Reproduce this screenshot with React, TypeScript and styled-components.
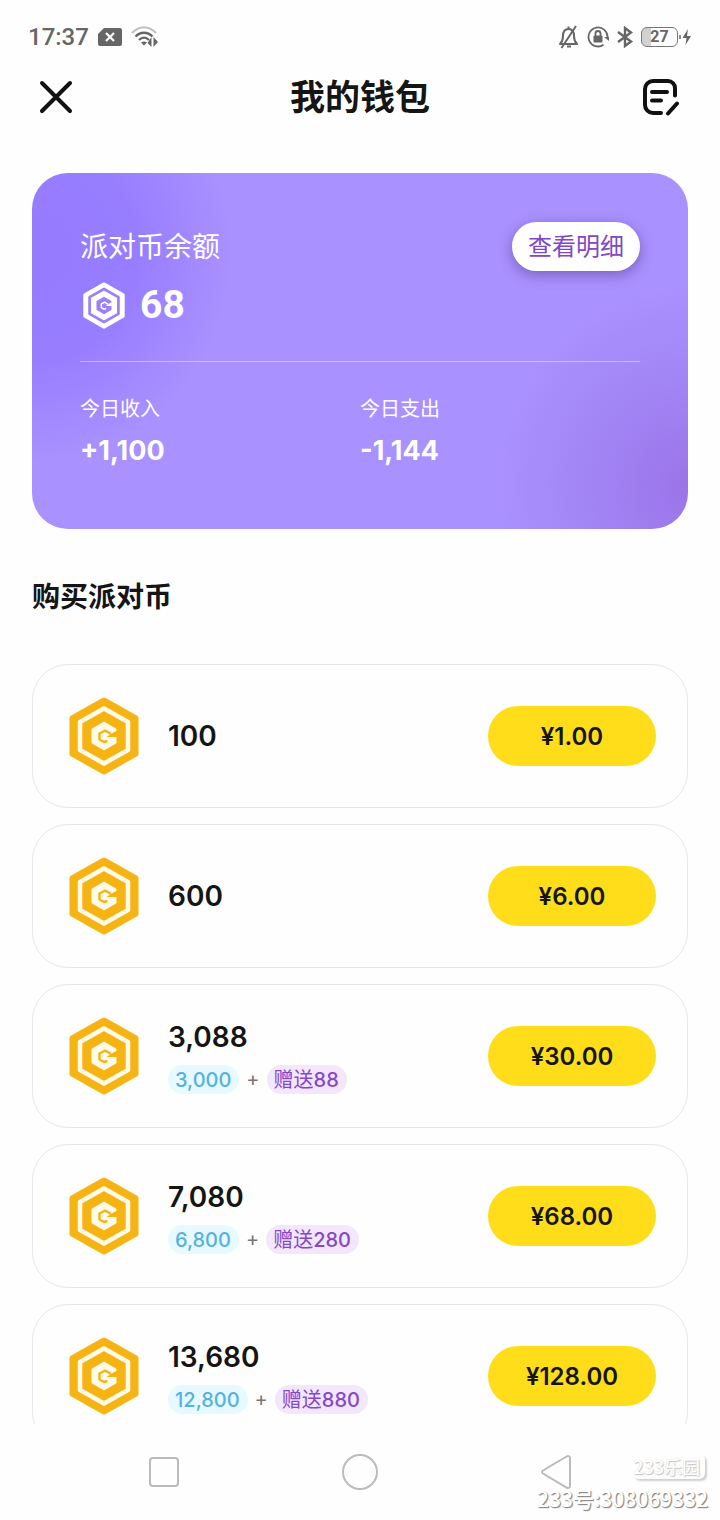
import React from 'react';
import styled, { createGlobalStyle } from 'styled-components';

const GlobalStyle = createGlobalStyle`
  *, *::before, *::after { box-sizing: border-box; }
  body {
    margin: 0;
    background: #fefefe;
    color: #151515;
    font-family: Inter, "Noto Sans CJK SC", sans-serif;
  }
  h1, h2, p, dl, dd, ul { margin: 0; padding: 0; }
  button { border: 0; padding: 0; background: none; font: inherit; color: inherit; cursor: pointer; }
`;

const Screen = styled.div`
  display: flex;
  flex-direction: column;
  height: 100vh;
  overflow: hidden;
`;

const StatusBar = styled.div`
  display: flex;
  align-items: center;
  justify-content: space-between;
  flex: none;
  height: 74px;
  padding: 0 28px;
  color: #666;
  font-family: Roboto, sans-serif;
`;

const StatusGroup = styled.div<{ $gap: number }>`
  display: flex;
  align-items: center;
  gap: ${({ $gap }) => $gap}px;
`;

const Clock = styled.span`
  font-size: 24px;
  font-weight: 500;
  line-height: 28px;
`;

const Battery = styled.span`
  display: flex;
  align-items: center;
  justify-content: center;
  width: 37px;
  height: 20px;
  border: 1px solid #777;
  border-radius: 6px;
  background: linear-gradient(90deg, #d2d2d2 27%, transparent 27%);
  font-size: 16px;
  font-weight: 700;
  line-height: 18px;
`;

const Header = styled.header`
  display: grid;
  grid-template-columns: 48px 1fr 48px;
  align-items: center;
  flex: none;
  height: 46px;
  padding: 0 32px;
`;

const IconButton = styled.button`
  display: flex;
  align-items: center;
  justify-content: center;
  height: 46px;
`;

const Title = styled.h1`
  font-size: 35px;
  font-weight: 700;
  line-height: 44px;
  text-align: center;
`;

const Main = styled.main`
  flex: 1;
  min-height: 0;
  padding: 53px 32px 0;
  overflow-y: auto;
  scrollbar-width: none;
`;

const BalanceCard = styled.section`
  padding: 49px 48px 60px;
  border-radius: 36px;
  color: #fff;
  background:
    radial-gradient(ellipse 190px 200px at 100% 88%, #9a74e8 0%, rgba(154, 116, 232, 0.5) 45%, rgba(154, 116, 232, 0) 100%),
    radial-gradient(ellipse 200px 210px at 0% 22%, #967bff 0%, #977dff 50%, rgba(151, 125, 255, 0) 100%),
    #a991ff;
`;

const BalanceTop = styled.div`
  display: flex;
  align-items: center;
  justify-content: space-between;
  height: 48px;
`;

const BalanceLabel = styled.h2`
  padding-top: 2px;
  font-size: 28px;
  font-weight: 400;
  line-height: 40px;
`;

const DetailButton = styled.button`
  height: 49px;
  padding: 2px 16px 0;
  border-radius: 25px;
  background: #fff;
  color: #8246c8;
  font-size: 24px;
  line-height: 46px;
  box-shadow: 0 4px 14px rgba(60, 40, 110, 0.45);
`;

const BalanceValue = styled.p`
  display: flex;
  align-items: center;
  gap: 15px;
  height: 46px;
  margin-top: 12px;
  padding: 0 3px;
  font-family: Roboto, sans-serif;
  font-size: 39px;
  font-weight: 700;
  line-height: 46px;
`;

const Stats = styled.dl`
  display: grid;
  grid-template-columns: 1fr 1fr;
  margin-top: 33px;
  padding-top: 33px;
  border-top: 1px solid rgba(255, 255, 255, 0.4);
`;

const StatLabel = styled.dt`
  font-size: 20px;
  line-height: 28px;
`;

const StatValue = styled.dd`
  margin-top: 10px;
  font-size: 27px;
  font-weight: 700;
  line-height: 36px;
`;

const SectionTitle = styled.h2`
  margin: 48px 0 47px;
  font-size: 28px;
  font-weight: 700;
  line-height: 40px;
`;

const PackageList = styled.ul`
  display: flex;
  flex-direction: column;
  gap: 16px;
  list-style: none;
`;

const PackageRow = styled.li`
  display: flex;
  align-items: center;
  gap: 29px;
  height: 144px;
  padding: 0 31px 0 36px;
  border: 1px solid #e7e6ec;
  border-radius: 36px;
`;

const PackageInfo = styled.div`
  display: flex;
  flex: 1;
  flex-direction: column;
  gap: 10px;
`;

const Amount = styled.span`
  font-size: 28px;
  font-weight: 600;
  line-height: 36px;
`;

const Breakdown = styled.span`
  display: flex;
  align-items: center;
  gap: 7px;
  color: #777;
  font-size: 20px;
`;

const Chip = styled.span<{ $tone: 'base' | 'gift' }>`
  padding: 1px 8px 0 7px;
  border-radius: 15px;
  background: ${({ $tone }) => ($tone === 'base' ? '#e6faff' : '#f2e7fd')};
  color: ${({ $tone }) => ($tone === 'base' ? '#55b2de' : '#8448c8')};
  font-weight: 500;
  line-height: 28px;
`;

const GiftText = styled.span`
  font-weight: 400;
`;

const PriceButton = styled.button`
  width: 168px;
  height: 60px;
  border-radius: 30px;
  background: #ffdd1a;
  font-size: 24px;
  font-weight: 600;
`;

const NavBar = styled.nav`
  position: relative;
  display: grid;
  grid-template-columns: repeat(3, 1fr);
  flex: none;
  height: 96px;
  padding: 0 66px;
`;

const NavButton = styled.button`
  display: flex;
  align-items: center;
  justify-content: center;
`;

const Watermark = styled.div`
  position: absolute;
  right: 12px;
  bottom: 8px;
  display: flex;
  flex-direction: column;
  align-items: flex-end;
  gap: 5px;
  color: #fff;
  font-family: "Noto Sans CJK SC", sans-serif;
  pointer-events: none;
`;

const WatermarkLogo = styled.span`
  margin-right: 3px;
  padding: 0 5px 0 0;
  border-radius: 0 6px 6px 6px;
  font-size: 18px;
  font-weight: 500;
  line-height: 25px;
  text-shadow: 1px 1px 1px #c4c4c4, 0 0 1px #ccc;
  box-shadow: 2px 2px 2px #d0d0d0;
`;

const WatermarkId = styled.span`
  font-size: 21px;
  font-weight: 500;
  line-height: 28px;
  text-shadow: 1px 1px 1px #888, 1px 1px 1px #aaa;
`;

function Coin({ size, body, mark }: { size: number; body: string; mark: string }) {
  return (
    <svg width={size} height={Math.round((size * 78) / 70)} viewBox="-35 -39 70 78" aria-hidden="true">
      <path d="M0-36 32-18V18L0 36-32 18V-18Z" fill={body} stroke={body} strokeWidth="5" strokeLinejoin="round" />
      <path d="M0-27.500 24-14V14L0 27.500-24 14V-14Z" fill="none" stroke={mark} strokeWidth="4.500" strokeLinejoin="round" />
      <path d="M0-14 12-7V-5L6-1.500H12V7L0 14-12 7V-7Z" fill={mark} stroke={mark} strokeWidth="1" strokeLinejoin="round" />
      <path d="M13-5.500V1H2.500L7-2Z" fill={body} />
      <path d="M7-2 1-5.500-4.500-2.500V3.500L0 6 3.500 5" fill="none" stroke={body} strokeWidth="2.400" strokeLinejoin="round" />
    </svg>
  );
}

function SimIcon() {
  return (
    <svg width="24" height="18" viewBox="0 0 24 18" aria-hidden="true">
      <path d="M6 0H22a2 2 0 0 1 2 2V16a2 2 0 0 1-2 2H2a2 2 0 0 1-2-2V6Z" fill="#666" />
      <path d="m8 5 8 8m0-8-8 8" stroke="#fff" strokeWidth="2.200" />
    </svg>
  );
}

function WifiIcon() {
  return (
    <svg width="28" height="22" viewBox="0 0 28 22" fill="none" strokeWidth="2.400" aria-hidden="true">
      <path d="M1 7C8-.5 18-.5 25 7" stroke="#c4c4c4" />
      <path d="M4.500 10.500c5-5 12-5 17 0" stroke="#666" />
      <path d="M8 14c3-3 7-3 10 0" stroke="#666" />
      <path d="m10 16.500 3 3 3-3c-2-1.500-4-1.500-6 0Z" fill="#666" />
      <path d="M20.500 11v10l-4-4ZM22.500 11v10l4.500-5Z" fill="#666" />
    </svg>
  );
}

function MutedBellIcon() {
  return (
    <svg width="22" height="24" viewBox="0 0 22 24" fill="none" stroke="#666" strokeWidth="2" aria-hidden="true">
      <path d="M2 19c2.500-2.500 3-4 3-8 0-4.500 2-7 5.500-7S16 6.500 16 11c0 4 .5 5.500 3 8Z" strokeLinejoin="round" />
      <path d="M10.500 1.500V4M18 1 3.500 23" />
      <path d="M9 21.500h4" />
    </svg>
  );
}

function RotationLockIcon() {
  return (
    <svg width="22" height="22" viewBox="0 0 22 22" fill="none" stroke="#666" strokeWidth="1.800" aria-hidden="true">
      <path d="M16.500 18.700A9.500 9.500 0 1 1 20.500 11.500" />
      <path d="M17 11h5v4Z" fill="#666" stroke="none" />
      <rect x="6.500" y="9.500" width="9" height="7" rx="1" fill="#666" stroke="none" />
      <path d="M8.500 10V7.500a2.500 2.500 0 0 1 5 0V10" />
    </svg>
  );
}

function BluetoothIcon() {
  return (
    <svg width="18" height="22" viewBox="0 0 18 22" fill="none" stroke="#666" strokeWidth="2.400" aria-hidden="true">
      <path d="M2 6 15 15.500 9 20V2l6 4.500L2 16" />
    </svg>
  );
}

function ChargeIcon() {
  return (
    <svg width="14" height="18" viewBox="0 0 14 18" fill="#666" aria-hidden="true">
      <path d="M2 7v4" stroke="#666" strokeWidth="1.500" />
      <path d="M10 1 4.500 10h4l-1 7L13 8H9Z" />
    </svg>
  );
}

const packages = [
  { amount: '100', price: '¥1.00' },
  { amount: '600', price: '¥6.00' },
  { amount: '3,088', price: '¥30.00', base: '3,000', gift: '88' },
  { amount: '7,080', price: '¥68.00', base: '6,800', gift: '280' },
  { amount: '13,680', price: '¥128.00', base: '12,800', gift: '880' },
];

export default function App() {
  return (
    <>
      <GlobalStyle />
      <Screen>
        <StatusBar>
          <StatusGroup $gap={9}>
            <Clock>17:37</Clock>
            <SimIcon />
            <WifiIcon />
          </StatusGroup>
          <StatusGroup $gap={7}>
            <MutedBellIcon />
            <RotationLockIcon />
            <BluetoothIcon />
            <StatusGroup $gap={0}>
              <Battery>27</Battery>
              <ChargeIcon />
            </StatusGroup>
          </StatusGroup>
        </StatusBar>

        <Header>
          <IconButton aria-label="关闭">
            <svg width="34" height="34" viewBox="0 0 34 34" aria-hidden="true">
              <path d="m3 3 28 28M31 3 3 31" stroke="#111" strokeWidth="4" strokeLinecap="round" />
            </svg>
          </IconButton>
          <Title>我的钱包</Title>
          <IconButton aria-label="账单">
            <svg width="42" height="38" viewBox="0 0 42 38" fill="none" stroke="#111" strokeWidth="4" strokeLinecap="round" aria-hidden="true">
              <path d="M32 17.500V10a7 7 0 0 0-7-7H10a8 8 0 0 0-8 8V27a8 8 0 0 0 8 8h8M9 14h15M9 22.500h9M34 25.500 25 35.500" />
            </svg>
          </IconButton>
        </Header>

        <Main>
          <BalanceCard>
            <BalanceTop>
              <BalanceLabel>派对币余额</BalanceLabel>
              <DetailButton>查看明细</DetailButton>
            </BalanceTop>
            <BalanceValue>
              <Coin size={42} body="#fff" mark="#9a80fa" />
              68
            </BalanceValue>
            <Stats>
              <div>
                <StatLabel>今日收入</StatLabel>
                <StatValue>+1,100</StatValue>
              </div>
              <div>
                <StatLabel>今日支出</StatLabel>
                <StatValue>-1,144</StatValue>
              </div>
            </Stats>
          </BalanceCard>

          <SectionTitle>购买派对币</SectionTitle>

          <PackageList>
            {packages.map((item) => (
              <PackageRow key={item.amount}>
                <Coin size={70} body="#f6b414" mark="#fffbe6" />
                <PackageInfo>
                  <Amount>{item.amount}</Amount>
                  {item.base && (
                    <Breakdown>
                      <Chip $tone="base">{item.base}</Chip>
                      +
                      <Chip $tone="gift"><GiftText>赠送</GiftText>{item.gift}</Chip>
                    </Breakdown>
                  )}
                </PackageInfo>
                <PriceButton>{item.price}</PriceButton>
              </PackageRow>
            ))}
          </PackageList>
        </Main>

        <NavBar>
          <NavButton aria-label="最近任务">
            <svg width="30" height="30" viewBox="0 0 30 30" aria-hidden="true">
              <rect x="1" y="1" width="28" height="28" rx="3" fill="none" stroke="#bbb" strokeWidth="2" />
            </svg>
          </NavButton>
          <NavButton aria-label="主页">
            <svg width="36" height="36" viewBox="0 0 36 36" aria-hidden="true">
              <circle cx="18" cy="18" r="17" fill="none" stroke="#bbb" strokeWidth="2" />
            </svg>
          </NavButton>
          <NavButton aria-label="返回">
            <svg width="32" height="36" viewBox="0 0 32 36" aria-hidden="true">
              <path d="M26.500 2.500 3 16.500q-2 1.500 0 3L26.500 33.500q3.500 1.500 3.500-2V4.500q0-3.500-3.500-2Z" fill="none" stroke="#bbb" strokeWidth="2" />
            </svg>
          </NavButton>
          <Watermark>
            <WatermarkLogo>233乐园</WatermarkLogo>
            <WatermarkId>233号:308069332</WatermarkId>
          </Watermark>
        </NavBar>
      </Screen>
    </>
  );
}
